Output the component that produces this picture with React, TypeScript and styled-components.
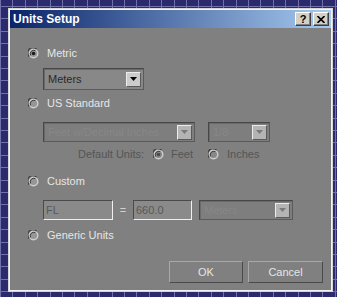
import React from 'react';
import styled, { createGlobalStyle } from 'styled-components';

const Global = createGlobalStyle`
  html, body { margin: 0; padding: 0; }
  body {
    width: 337px;
    height: 297px;
    overflow: hidden;
    background-color: #2a2a6c;
    background-image:
      repeating-linear-gradient(to right, #7070aa 0 1px, transparent 1px 12.4px),
      repeating-linear-gradient(to bottom, #7070aa 0 1px, transparent 1px 12.4px);
    background-position: 0px 6px;
    font-family: "Liberation Sans", Arial, sans-serif;
  }
`;

const Stage = styled.div`
  padding: 8px 0 0 8px;
`;

const Dialog = styled.div`
  box-sizing: border-box;
  width: 325px;
  height: 284px;
  border: 1px solid #d6d6d6;
  box-shadow: inset 0 0 0 1px #f2f2f2;
  padding: 1px;
  background: #808080;
  display: flex;
  flex-direction: column;
`;

const TitleBar = styled.div`
  height: 18px;
  display: flex;
  align-items: center;
  padding: 0 2px 0 2px;
  background: linear-gradient(to right, #0a246a, #a6caf0);
  color: #ffffff;
  font-weight: bold;
  font-size: 12px;
`;

const TitleText = styled.span`
  flex: 1;
  padding-left: 1px;
`;

const TitleButton = styled.div<{ $gap?: number }>`
  box-sizing: border-box;
  width: 16px;
  height: 14px;
  margin-left: ${p => p.$gap ?? 0}px;
  background: #d4d0c8;
  border-top: 1px solid #ffffff;
  border-left: 1px solid #ffffff;
  border-right: 1px solid #404040;
  border-bottom: 1px solid #404040;
  box-shadow: inset -1px -1px 0 #808080;
  display: flex;
  align-items: center;
  justify-content: center;
  color: #000;
  font-size: 11px;
  font-weight: bold;
  line-height: 1;
`;

const Body = styled.div`
  flex: 1;
  display: flex;
  flex-direction: column;
  padding: 18px 8px 0 18px;
  color: #e6e6e6;
  font-size: 11px;
`;

const Row = styled.div<{ $top: number; $indent?: number }>`
  display: flex;
  align-items: center;
  height: 14px;
  margin-top: ${p => p.$top}px;
  margin-left: ${p => p.$indent ?? 0}px;
`;

const FieldRow = styled.div<{ $top: number }>`
  display: flex;
  align-items: center;
  margin-top: ${p => p.$top}px;
  margin-left: 15px;
`;

const Label = styled.span<{ $dim?: boolean; $gap?: number }>`
  margin-left: ${p => p.$gap ?? 8}px;
  color: ${p => (p.$dim ? '#555555' : '#e6e6e6')};
  white-space: nowrap;
`;

const RadioBox = styled.svg<{ $gap?: number }>`
  flex: none;
  margin-left: ${p => p.$gap ?? 0}px;
`;

const Radio: React.FC<{ checked?: boolean; dim?: boolean; gap?: number }> = ({ checked, dim, gap }) => (
  <RadioBox $gap={gap} width="11" height="11" viewBox="0 0 11 11">
    <circle cx="5.5" cy="5.5" r="5" fill="#cfcfcf" />
    <path d="M1.2 8.5 A5 5 0 0 1 8.5 1.2" stroke="#404040" strokeWidth="1.2" fill="none" />
    <circle cx="5.5" cy="5.5" r="3.6" fill={dim ? '#888888' : '#969696'} />
    <path d="M2.6 7.4 A3.6 3.6 0 0 1 7.4 2.6" stroke="#3a3a3a" strokeWidth="1" fill="none" />
    {checked && <circle cx="5.5" cy="5.5" r="1.8" fill={dim ? '#4a4a4a' : '#1c1c1c'} />}
  </RadioBox>
);

const SelectBox = styled.div<{ $w: number; $h: number; $dim?: boolean; $gap?: number }>`
  box-sizing: border-box;
  width: ${p => p.$w}px;
  height: ${p => p.$h}px;
  margin-left: ${p => p.$gap ?? 0}px;
  border: 1px solid #474747;
  border-bottom-color: #5a5a5a;
  border-right-color: #5a5a5a;
  box-shadow: inset 1px 1px 0 #6a6a6a;
  background: ${p => (p.$dim ? '#7e7e7e' : '#888888')};
  display: flex;
  align-items: center;
  padding: 1px 2px 1px 4px;
  color: ${p => (p.$dim ? '#878787' : '#2a2a2a')};
  font-size: 11px;
`;

const SelectText = styled.span`
  flex: 1;
  white-space: nowrap;
  overflow: hidden;
`;

const ArrowButton = styled.div<{ $dim?: boolean }>`
  box-sizing: border-box;
  width: 15px;
  height: 15px;
  background: ${p => (p.$dim ? '#b4b4b4' : '#cccccc')};
  border-top: 1px solid #ececec;
  border-left: 1px solid #ececec;
  border-right: 1px solid #5a5a5a;
  border-bottom: 1px solid #5a5a5a;
  display: flex;
  align-items: center;
  justify-content: center;
`;

const Select: React.FC<{ w: number; h: number; text: string; dim?: boolean; gap?: number }> = ({ w, h, text, dim, gap }) => (
  <SelectBox $w={w} $h={h} $dim={dim} $gap={gap}>
    <SelectText>{text}</SelectText>
    <ArrowButton $dim={dim}>
      <svg width="7" height="4" viewBox="0 0 7 4">
        <path d="M0 0 H7 L3.5 4 Z" fill={dim ? '#7a7a7a' : '#000'} />
      </svg>
    </ArrowButton>
  </SelectBox>
);

const TextBox = styled.div<{ $w: number }>`
  box-sizing: border-box;
  width: ${p => p.$w}px;
  height: 20px;
  border-top: 1px solid #4a4a4a;
  border-left: 1px solid #4a4a4a;
  border-right: 1px solid #f0f0f0;
  border-bottom: 1px solid #f0f0f0;
  background: #8a8a8a;
  color: #585858;
  font-size: 11px;
  padding: 2px 2px 0 2px;
  line-height: 14px;
`;

const Equals = styled.span`
  width: 20px;
  text-align: center;
  color: #cfcfcf;
`;

const Footer = styled.div`
  display: flex;
  justify-content: flex-end;
  gap: 5px;
  margin-top: 19px;
`;

const Button = styled.div<{ $w: number }>`
  box-sizing: border-box;
  width: ${p => p.$w}px;
  height: 22px;
  border-top: 1px solid #a8a8a8;
  border-left: 1px solid #a8a8a8;
  border-right: 1px solid #4a4a4a;
  border-bottom: 1px solid #4a4a4a;
  display: flex;
  align-items: center;
  justify-content: center;
  color: #e6e6e6;
  font-size: 11px;
`;

export default function App() {
  return (
    <>
      <Global />
      <Stage>
        <Dialog>
          <TitleBar>
            <TitleText>Units Setup</TitleText>
            <TitleButton>?</TitleButton>
            <TitleButton $gap={2}>
              <svg width="8" height="7" viewBox="0 0 8 7">
                <path d="M0.5 0 L7.5 7 M7.5 0 L0.5 7" stroke="#000" strokeWidth="1.6" />
              </svg>
            </TitleButton>
          </TitleBar>
          <Body>
            <Row $top={0}>
              <Radio checked />
              <Label>Metric</Label>
            </Row>
            <FieldRow $top={8}>
              <Select w={101} h={22} text="Meters" />
            </FieldRow>
            <Row $top={6}>
              <Radio />
              <Label>US Standard</Label>
            </Row>
            <FieldRow $top={12}>
              <Select w={152} h={20} text="Feet w/Decimal Inches" dim />
              <Select w={62} h={20} text="1/8" dim gap={13} />
            </FieldRow>
            <Row $top={5} $indent={50}>
              <Label $dim $gap={0}>Default Units:</Label>
              <Radio checked dim gap={9} />
              <Label $dim $gap={7}>Feet</Label>
              <Radio dim gap={15} />
              <Label $dim $gap={8}>Inches</Label>
            </Row>
            <Row $top={13}>
              <Radio />
              <Label>Custom</Label>
            </Row>
            <FieldRow $top={12}>
              <TextBox $w={70}>FL</TextBox>
              <Equals>=</Equals>
              <TextBox $w={59}>660.0</TextBox>
              <Select w={94} h={20} text="Meters" dim gap={7} />
            </FieldRow>
            <Row $top={8}>
              <Radio />
              <Label>Generic Units</Label>
            </Row>
            <Footer>
              <Button $w={74}>OK</Button>
              <Button $w={75}>Cancel</Button>
            </Footer>
          </Body>
        </Dialog>
      </Stage>
    </>
  );
}
